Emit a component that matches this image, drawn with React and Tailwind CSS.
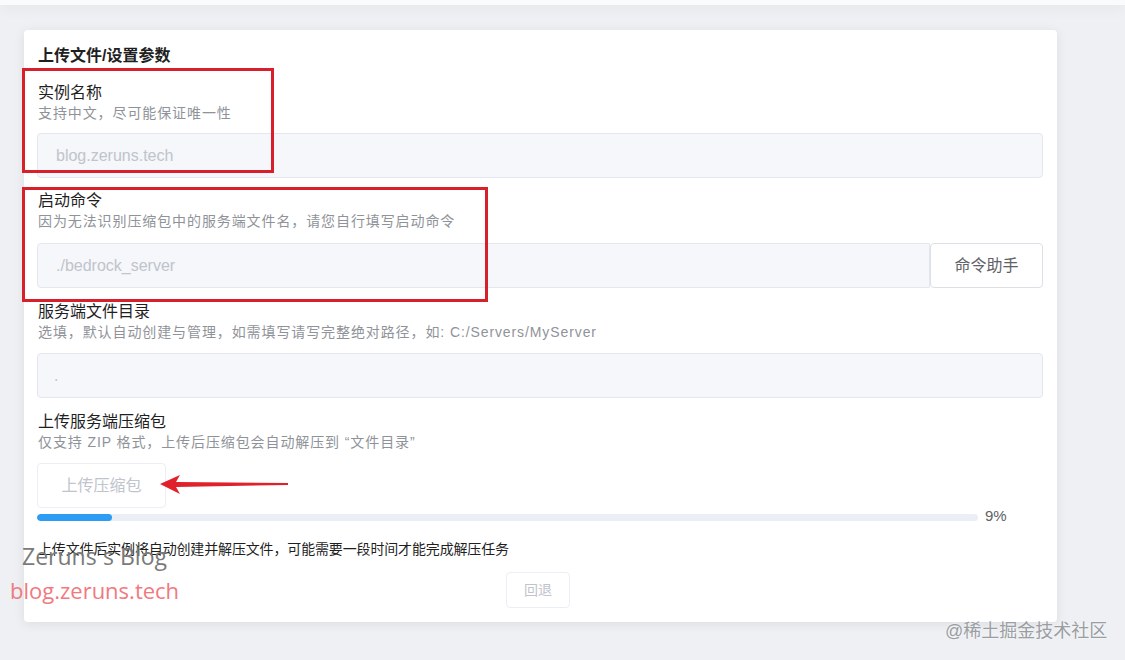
import React from 'react';

const FONT = { fontFamily: '"Liberation Sans", "Noto Sans CJK SC", sans-serif' };

function Field({ label, hint, children, className = '' }) {
  return (
    <div className={className}>
      <p className="text-[16px] leading-[20px] text-[#1f1f1f]">{label}</p>
      <p className="text-[14px] leading-[20px] text-[#8f9399] tracking-[0.9px]">{hint}</p>
      {children}
    </div>
  );
}

function Input({ value, className = '' }) {
  return (
    <div className={`h-[45px] flex items-center px-[18px] bg-[#f5f7fa] border border-[#e4e7ed] rounded text-[16px] text-[#c0c4cc] ${className}`}>
      {value}
    </div>
  );
}

export default function App() {
  return (
    <div className="relative w-[1125px] h-[660px] overflow-hidden bg-[#eef0f3]" style={FONT}>
      {/* header strip */}
      <div className="h-[5px] bg-[#fafbfc] shadow-[0_2px_14px_rgba(0,0,0,0.08)]" />

      {/* card */}
      <div className="ml-[24px] mt-[25px] w-[1033px] bg-white rounded shadow-[0_2px_12px_rgba(0,0,0,0.08)] pl-[13px] pr-[14px] pt-[14px] pb-[14px]">
        <h2 className="text-[16px] leading-[24px] font-bold text-[#1f1f1f] pl-[1px]">上传文件/设置参数</h2>

        <Field className="mt-[15px] pl-[1px]" label="实例名称" hint="支持中文，尽可能保证唯一性">
          <Input className="mt-[10px] -ml-[1px]" value="blog.zeruns.tech" />
        </Field>

        <Field className="mt-[13px] pl-[1px]" label="启动命令" hint="因为无法识别压缩包中的服务端文件名，请您自行填写启动命令">
          <div className="mt-[12px] -ml-[1px] flex">
            <Input className="flex-1 rounded-r-none" value="./bedrock_server" />
            <button className="w-[113px] h-[45px] border border-[#dcdfe6] rounded bg-white text-[16px] text-[#606266]">命令助手</button>
          </div>
        </Field>

        <Field className="mt-[14px] pl-[1px]" label="服务端文件目录" hint="选填，默认自动创建与管理，如需填写请写完整绝对路径，如: C:/Servers/MyServer">
          <Input className="mt-[11px] -ml-[1px] text-[10px] !px-[16px]" value="." />
        </Field>

        <Field className="mt-[14px] pl-[1px]" label="上传服务端压缩包" hint="仅支持 ZIP 格式，上传后压缩包会自动解压到 “文件目录”">
          <button className="mt-[11px] -ml-[1px] w-[129px] h-[45px] border border-[#ebeef5] rounded bg-white text-[16px] text-[#c0c4cc]">上传压缩包</button>
        </Field>

        <div className="mt-[6px] h-[7px] flex items-center">
          <div className="w-[941px] h-[7px] rounded-full bg-[#ebeef5] overflow-hidden">
            <div className="h-full rounded-full bg-[#2d9cf5]" style={{ width: '8%' }} />
          </div>
          <span className="ml-[7px] text-[15px] leading-[16px] text-[#606266] mt-[-3px]">9%</span>
        </div>

        <p className="mt-[18px] text-[14px] leading-[20px] text-[#1f1f1f] pl-[1px] tracking-[-0.15px]">上传文件后实例将自动创建并解压文件，可能需要一段时间才能完成解压任务</p>

        <div className="mt-[13px] flex justify-center pr-[4px]">
          <button className="w-[64px] h-[36px] border border-[#ebeef5] rounded bg-white text-[14px] text-[#c0c4cc]">回退</button>
        </div>
      </div>

      {/* red annotation boxes */}
      <div className="absolute left-[22px] top-[68px] w-[252px] h-[105px] border-[3px] border-[#d8202c]" />
      <div className="absolute left-[22px] top-[187px] w-[466px] h-[115px] border-[3px] border-[#d8202c]" />

      {/* red arrow */}
      <svg className="absolute left-[155px] top-[472px]" width="140" height="26" viewBox="0 0 140 26">
        <polygon points="5,12 25,3 21,10 133,11 133,13 21,15 25,22" fill="#e0202a" />
      </svg>

      {/* blog watermark */}
      <div className="absolute left-[22px] top-[541px] text-[23px] leading-[30px] text-[#7a7a7a]" style={{ fontFamily: '"Open Sans", sans-serif' }}>Zeruns`s Blog</div>
      <div className="absolute left-[10px] top-[575px] text-[22px] leading-[30px] text-[#f07a80]" style={{ fontFamily: '"Open Sans", sans-serif' }}>blog.zeruns.tech</div>

      {/* site watermark */}
      <div className="absolute left-[945px] top-[619px] text-[18px] leading-[24px] text-[#9a9da2] [text-shadow:0_0_2px_#fff]">@稀土掘金技术社区</div>
    </div>
  );
}
